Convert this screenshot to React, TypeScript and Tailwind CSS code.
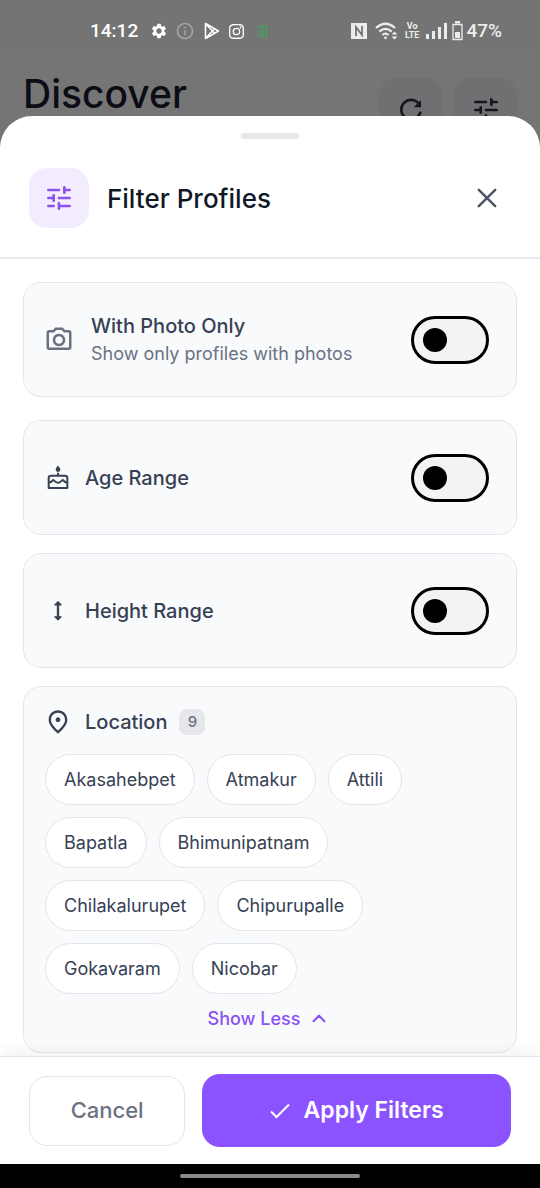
import React, { useState } from "react";
import {
  MdInfoOutline,
  MdOutlinePhotoCamera,
  MdOutlinePlace,
  MdSettings,
} from "react-icons/md";
import { BsInstagram } from "react-icons/bs";

const locations = [
  "Akasahebpet",
  "Atmakur",
  "Attili",
  "Bapatla",
  "Bhimunipatnam",
  "Chilakalurupet",
  "Chipurupalle",
  "Gokavaram",
  "Nicobar",
];

const TuneIcon = ({ className }: { className: string }) => (
  <svg
    viewBox="0 0 24 24"
    className={className}
    fill="none"
    stroke="currentColor"
    strokeWidth="2"
    strokeLinecap="round"
    aria-hidden="true"
  >
    <path d="M4 6h8M16 4v4M16 6h4M4 12h4M8 10v4M12 12h8M4 18h4M12 16v4M12 18h8" />
  </svg>
);

const CakeIcon = () => (
  <svg
    viewBox="0 0 24 24"
    className="w-7 h-7"
    fill="none"
    stroke="currentColor"
    strokeWidth="1.7"
    strokeLinejoin="round"
    aria-hidden="true"
  >
    <path d="M12 7.5V10M4 20.5V12q0-2 2-2h12q2 0 2 2v8.500zM4 16c1.500 0 2-.4 2.700-1.200L8 13.600l1.400 1.300c1.500 1.500 3.700 1.500 5.200 0L16 13.600l1.300 1.200C18 15.600 18.500 16 20 16" />
    <path
      d="M12 1.200c1.200 1.600 2 2.500 2 3.600a2 2 0 0 1-4 0c0-1.100.8-2 2-3.600z"
      fill="currentColor"
      stroke="none"
    />
  </svg>
);

const HeightIcon = () => (
  <svg
    viewBox="0 0 24 24"
    className="w-7 h-7"
    fill="currentColor"
    stroke="currentColor"
    strokeLinejoin="round"
    aria-hidden="true"
  >
    <path d="M12 4 9.300 6.700h5.400zM12 19.600 9.300 16.900h5.400z" />
    <path d="M12 6v12" strokeWidth="2" />
  </svg>
);

const StatusBar = () => (
  <div className="flex justify-between items-center h-[46px] pt-4 pl-[90px] pr-[38px] bg-[#737473] text-white font-[Roboto,sans-serif] text-[19px] font-medium">
    <div className="flex items-center">
      <span>14:12</span>
      <MdSettings className="ml-3 w-[18px] h-[18px]" />
      <MdInfoOutline className="ml-[7px] w-5 h-5 text-[#a3a3a3]" />
      <svg
        viewBox="0 0 16 18"
        className="ml-[9px] w-4 h-[18px]"
        fill="none"
        stroke="currentColor"
        strokeWidth="1.6"
        strokeLinejoin="round"
        aria-hidden="true"
      >
        <path d="M1.500 1.500v15l13-7.500zM1.500 1.500 10.500 11.300M1.500 16.500 10.500 6.700" />
      </svg>
      <BsInstagram className="ml-[9px] w-[15px] h-[15px]" />
      <svg
        viewBox="0 0 8 12"
        className="ml-[15px] w-2 h-3"
        fill="none"
        stroke="#2fb457"
        aria-hidden="true"
      >
        <path d="M.5 2h7v9.500h-7zM2.500.7h3" />
        <path d="M4.500 4 3 7h2L3.500 10" />
      </svg>
    </div>
    <div className="flex items-center text-[#ececec]">
      <svg viewBox="0 0 16 16" className="w-4 h-4" aria-hidden="true">
        <path fill="currentColor" d="M0 0h16v16H0z" />
        <path
          d="M5 13V4l6 8V3"
          fill="none"
          stroke="#737473"
          strokeWidth="1.800"
        />
      </svg>
      <svg
        viewBox="0 0 24 18"
        className="ml-2 w-6 h-[18px]"
        fill="none"
        stroke="currentColor"
        strokeWidth="2.200"
        aria-hidden="true"
      >
        <path d="M1 6q9.500-8.500 19 0M4.300 9.600q6.200-5.400 12.400 0M7.400 13q3.100-2.600 6.200 0" />
        <circle cx="10.500" cy="15.800" r="1.400" fill="currentColor" stroke="none" />
        <path
          d="M19.500 9.500 22.500 12.500h-6zM19.500 17.500 22.500 14.500h-6z"
          fill="currentColor"
          stroke="none"
        />
      </svg>
      <span className="ml-1.5 flex flex-col items-center text-[9px] leading-[9px] font-bold">
        <span>Vo</span>
        <span>LTE</span>
      </span>
      <svg
        viewBox="0 0 22 16"
        className="ml-[7px] w-[22px] h-4"
        fill="currentColor"
        aria-hidden="true"
      >
        <path d="M0 11h3v5H0zM6 8h3v8H6zM12 4h3v12h-3zM18 0h3v16h-3z" />
      </svg>
      <svg viewBox="0 0 11 20" className="ml-1 w-[11px] h-5" aria-hidden="true">
        <path
          d="M1 3.500h9v15H1z"
          fill="none"
          stroke="currentColor"
          strokeWidth="1.300"
        />
        <path d="M3 0h5v2.500H3zM3 11h5v6H3z" fill="currentColor" />
      </svg>
      <span className="ml-[3px]">47%</span>
    </div>
  </div>
);

const Switch = ({ id }: { id: string }) => {
  const [on, setOn] = useState(false);
  return (
    <input
      id={id}
      type="checkbox"
      role="switch"
      checked={on}
      onChange={() => setOn(!on)}
      className="appearance-none shrink-0 flex items-center w-[78px] h-12 px-[9px] rounded-full border-3 border-black bg-[#f3f3f5] before:w-6 before:h-6 before:rounded-full before:bg-black checked:justify-end checked:bg-[#f3ebff]"
    />
  );
};

const card = "rounded-[18px] border border-[#e2e5ea] bg-[#f9fafc]";
const row = "flex items-center min-h-[115px] pl-5 pr-[27px]";

const App = () => {
  const [expanded, setExpanded] = useState(true);
  const shown = expanded ? locations : locations.slice(0, 5);

  return (
    <div className="min-h-screen flex flex-col bg-[#757575] font-[Inter,sans-serif] text-gray-700">
      <StatusBar />
      <header className="flex items-start gap-3 pt-8 px-[23px]">
        <h1 className="flex-1 text-[39px] leading-8 text-[#0b0c14] font-medium">
          Discover
        </h1>
        <button
          aria-label="Refresh"
          className="flex justify-center items-center w-[63px] h-16 rounded-[18px] bg-[#6f7072] text-[#15171c]"
        >
          <svg
            viewBox="0 0 24 24"
            className="w-8 h-8"
            fill="none"
            stroke="currentColor"
            strokeWidth="2"
            strokeLinecap="round"
            aria-hidden="true"
          >
            <path d="M18.500 8.300A7.300 7.300 0 1 0 19 14" />
            <path d="M19.500 4.500v5.500H14z" fill="currentColor" stroke="none" />
          </svg>
        </button>
        <button
          aria-label="Filters"
          className="flex justify-center items-center w-[63px] h-16 rounded-[18px] bg-[#6f7072] text-[#15171c]"
        >
          <TuneIcon className="w-8 h-8" />
        </button>
      </header>

      <main className="relative -mt-[26px] flex-1 flex flex-col rounded-t-[32px] bg-white">
        <div className="mt-[17px] mx-auto w-[58px] h-1.5 rounded-full bg-gray-200" />
        <div className="flex items-center py-[29px] px-[29px] border-b-2 border-[#ebebed]">
          <div className="flex justify-center items-center w-[60px] h-[60px] rounded-[18px] bg-[#f3ecff] text-[#8b52f0]">
            <TuneIcon className="w-8 h-8" />
          </div>
          <h2 className="flex-1 ml-[18px] text-[26px] font-medium text-gray-900">
            Filter Profiles
          </h2>
          <button
            aria-label="Close"
            className="flex justify-center items-center w-12 h-12 text-gray-600"
          >
            <svg
              viewBox="0 0 20 20"
              className="w-5 h-5"
              stroke="currentColor"
              strokeWidth="2.500"
              strokeLinecap="round"
              aria-hidden="true"
            >
              <path d="M1.800 1.800 18.200 18.200M18.200 1.800 1.800 18.200" />
            </svg>
          </button>
        </div>

        <div className="flex-1 pt-[23px] px-[23px] pb-0.5">
          <div className={`${card} ${row} mb-[23px]`}>
            <MdOutlinePhotoCamera className="w-[30px] h-[30px] text-gray-500" />
            <label htmlFor="photo" className="flex-1 ml-[17px]">
              <span className="block text-xl leading-7 font-medium">
                With Photo Only
              </span>
              <span className="block text-lg leading-7 text-gray-500">
                Show only profiles with photos
              </span>
            </label>
            <Switch id="photo" />
          </div>

          <div className="flex flex-col gap-[18px]">
            <div className={`${card} ${row}`}>
              <CakeIcon />
              <label
                htmlFor="age"
                className="flex-1 ml-[13px] text-xl font-medium"
              >
                Age Range
              </label>
              <Switch id="age" />
            </div>

            <div className={`${card} ${row}`}>
              <HeightIcon />
              <label
                htmlFor="height"
                className="flex-1 ml-[13px] text-xl font-medium"
              >
                Height Range
              </label>
              <Switch id="height" />
            </div>

            <section className={`${card} pt-[22px] pb-5 px-[21px]`}>
              <div className="flex items-center h-[26px] -ml-px">
                <MdOutlinePlace className="w-7 h-7" />
                <h3 className="ml-[13px] text-xl font-medium">Location</h3>
                <span className="ml-3 w-[26px] h-[26px] rounded-lg bg-gray-200 text-center text-[15px] leading-[26px] font-medium text-gray-500">
                  9
                </span>
              </div>
              <div className="flex flex-wrap gap-3 mt-[19px]">
                {shown.map((name) => (
                  <button
                    key={name}
                    className="h-[51px] px-[18px] rounded-full border border-[#e2e5ea] bg-white text-lg"
                  >
                    {name}
                  </button>
                ))}
              </div>
              <button
                onClick={() => setExpanded(!expanded)}
                className="flex justify-center items-center gap-1.5 w-full mt-3 h-[26px] text-lg font-medium text-[#8b52f0]"
              >
                {expanded ? "Show Less" : "Show More"}
                <svg
                  viewBox="0 0 24 24"
                  className={expanded ? "w-[26px] h-[26px]" : "w-[26px] h-[26px] rotate-180"}
                  fill="none"
                  stroke="currentColor"
                  strokeWidth="2"
                  strokeLinecap="round"
                  strokeLinejoin="round"
                  aria-hidden="true"
                >
                  <path d="m7 14 5-5 5 5" />
                </svg>
              </button>
            </section>
          </div>
        </div>

        <footer className="relative flex items-center gap-[17px] py-[17px] px-[29px] border-t border-[#e2e5ea] bg-white shadow-[0_-4px_14px_rgba(0,0,0,0.06)]">
          <button className="flex-1 h-[70px] rounded-[18px] border border-[#e2e5ea] text-[22px] font-medium text-gray-500">
            Cancel
          </button>
          <button className="flex-2 flex justify-center items-center gap-3.5 h-[73px] rounded-[18px] bg-[#8b52ff] text-[23px] font-semibold text-white">
            <svg
              viewBox="0 0 20 16"
              className="w-5 h-4"
              fill="none"
              stroke="currentColor"
              strokeWidth="2"
              aria-hidden="true"
            >
              <path d="m1 8.500 5.500 5.500L19 1.500" />
            </svg>
            Apply Filters
          </button>
        </footer>
      </main>

      <div className="flex justify-center items-center h-6 bg-black">
        <div className="w-1/3 h-1 rounded-full bg-[#8a8a8a]" />
      </div>
    </div>
  );
};

export default App;
